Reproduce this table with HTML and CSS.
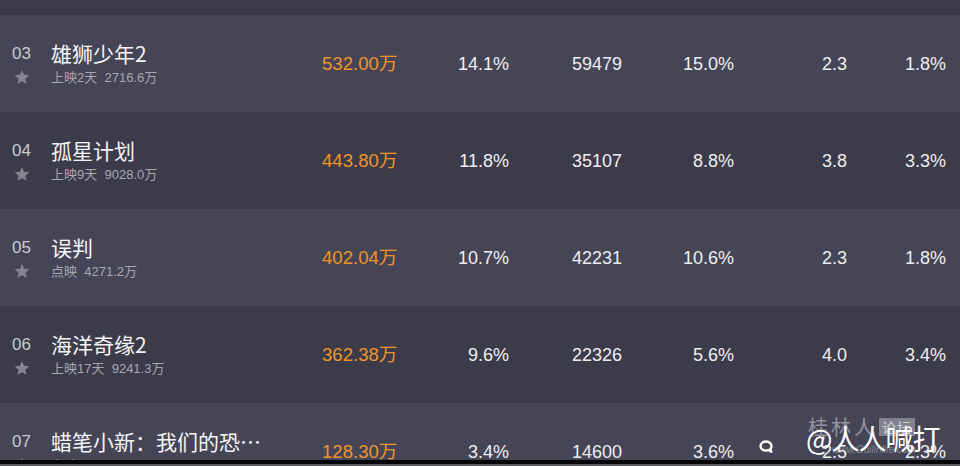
FILE: index.html
```html
<!DOCTYPE html>
<html lang="zh">
<head>
<meta charset="utf-8">
<link rel="stylesheet" href="styles.css">
</head>
<body>
<div class="screen">
  <div class="table">
    <div class="band"></div>
    <div class="row light">
      <div class="rankcol"><span class="rank">03</span><svg class="star" width="16" height="16" viewBox="0 0 24 24"><path d="M12 1.5l3.2 7.2 7.8.7-5.9 5.2 1.8 7.7L12 18.3l-6.9 4 1.8-7.7L1 9.4l7.8-.7z"/></svg></div>
      <div class="titlecol"><div class="title">雄狮少年2</div><div class="sub">上映2天&nbsp; 2716.6万</div></div>
      <div class="num box">532.00万</div>
      <div class="num">14.1%</div>
      <div class="num">59479</div>
      <div class="num">15.0%</div>
      <div class="num">2.3</div>
      <div class="num">1.8%</div>
    </div>
    <div class="row dark">
      <div class="rankcol"><span class="rank">04</span><svg class="star" width="16" height="16" viewBox="0 0 24 24"><path d="M12 1.5l3.2 7.2 7.8.7-5.9 5.2 1.8 7.7L12 18.3l-6.9 4 1.8-7.7L1 9.4l7.8-.7z"/></svg></div>
      <div class="titlecol"><div class="title">孤星计划</div><div class="sub">上映9天&nbsp; 9028.0万</div></div>
      <div class="num box">443.80万</div>
      <div class="num">11.8%</div>
      <div class="num">35107</div>
      <div class="num">8.8%</div>
      <div class="num">3.8</div>
      <div class="num">3.3%</div>
    </div>
    <div class="row light">
      <div class="rankcol"><span class="rank">05</span><svg class="star" width="16" height="16" viewBox="0 0 24 24"><path d="M12 1.5l3.2 7.2 7.8.7-5.9 5.2 1.8 7.7L12 18.3l-6.9 4 1.8-7.7L1 9.4l7.8-.7z"/></svg></div>
      <div class="titlecol"><div class="title">误判</div><div class="sub">点映&nbsp; 4271.2万</div></div>
      <div class="num box">402.04万</div>
      <div class="num">10.7%</div>
      <div class="num">42231</div>
      <div class="num">10.6%</div>
      <div class="num">2.3</div>
      <div class="num">1.8%</div>
    </div>
    <div class="row dark">
      <div class="rankcol"><span class="rank">06</span><svg class="star" width="16" height="16" viewBox="0 0 24 24"><path d="M12 1.5l3.2 7.2 7.8.7-5.9 5.2 1.8 7.7L12 18.3l-6.9 4 1.8-7.7L1 9.4l7.8-.7z"/></svg></div>
      <div class="titlecol"><div class="title">海洋奇缘2</div><div class="sub">上映17天&nbsp; 9241.3万</div></div>
      <div class="num box">362.38万</div>
      <div class="num">9.6%</div>
      <div class="num">22326</div>
      <div class="num">5.6%</div>
      <div class="num">4.0</div>
      <div class="num">3.4%</div>
    </div>
    <div class="row light">
      <div class="rankcol"><span class="rank">07</span><svg class="star" width="16" height="16" viewBox="0 0 24 24"><path d="M12 1.5l3.2 7.2 7.8.7-5.9 5.2 1.8 7.7L12 18.3l-6.9 4 1.8-7.7L1 9.4l7.8-.7z"/></svg></div>
      <div class="titlecol"><div class="title">蜡笔小新：我们的恐…</div><div class="sub">上映5天&nbsp; 1032.6万</div></div>
      <div class="num box">128.30万</div>
      <div class="num">3.4%</div>
      <div class="num">14600</div>
      <div class="num">3.6%</div>
      <div class="num">2.5</div>
      <div class="num">2.3%</div>
    </div>
    <div class="watermark">
      <div class="wm-site">桂林人<span class="wm-tag">论坛</span></div>
      <div class="wm-url">www.Guilinlife.com</div>
      <div class="wm-weibo">@人人喊打</div>
    </div>
    <svg class="wm-icon" width="16" height="16" viewBox="0 0 16 16">
      <path d="M8 2.5c-3.2 0-5.5 2-5.5 4.6S4.8 11.6 8 11.6c1 0 1.9-.2 2.7-.6l2.6 1.8-.9-2.7c.7-.8 1.1-1.8 1.1-2.9 0-2.6-2.3-4.7-5.5-4.7z" fill="none" stroke="#ffffff" stroke-width="2.4" stroke-linejoin="round"/>
    </svg>
  </div>
  <div class="edge-black"></div>
  <div class="edge-grey"></div>
</div>
</body>
</html>
```

FILE: styles.css
```css
* { box-sizing: border-box; }
html, body { margin: 0; padding: 0; }
body {
  width: 960px;
  height: 466px;
  overflow: hidden;
  background: #3c3b4a;
  font-family: "Liberation Sans", "Noto Sans CJK SC", sans-serif;
}
.screen {
  display: flex;
  flex-direction: column;
  height: 466px;
}
.table {
  position: relative;
  height: 460px;
  overflow: hidden;
}
.band {
  height: 15px;
  background: #3b3a48;
}
.row {
  height: 97px;
  display: grid;
  grid-template-columns: 51px 271px 78px 109px 113px 112px 113px 99px;
  align-items: start;
}
.row.light { background: #464556; }
.row.dark { background: #3c3b4a; }
.rankcol {
  display: flex;
  flex-direction: column;
  align-items: flex-start;
  padding-top: 28px;
  padding-left: 12px;
}
.rank {
  font-size: 17px;
  line-height: 22px;
  color: #c9c9d0;
}
.star {
  margin-top: 4px;
  margin-left: 2px;
  fill: #85848f;
}
.titlecol {
  padding-top: 25px;
  display: flex;
  flex-direction: column;
}
.title {
  font-family: "Noto Sans CJK SC", sans-serif;
  font-size: 21px;
  line-height: 26px;
  color: #f4f4f6;
  white-space: nowrap;
}
.sub {
  margin-top: 4px;
  font-family: "Liberation Sans", "Noto Sans CJK SC", sans-serif;
  font-size: 13px;
  line-height: 16px;
  color: #a8a7b0;
  white-space: nowrap;
}
.num {
  padding-top: 37px;
  font-size: 18px;
  line-height: 24px;
  color: #eeeef2;
  text-align: right;
  white-space: nowrap;
}
.num.box {
  text-align: left;
  font-size: 18.6px;
  color: #f0942a;
  font-family: "Liberation Sans", "Noto Sans CJK SC", sans-serif;
}
.edge-black {
  height: 4px;
  background: #050505;
}
.edge-grey {
  height: 2px;
  background: #5a5a60;
}
.watermark {
  position: absolute;
  left: 806px;
  top: 414px;
  width: 152px;
  height: 46px;
}
.wm-site {
  position: absolute;
  left: 2px;
  top: 0;
  font-family: "Noto Sans CJK SC", sans-serif;
  font-size: 20px;
  line-height: 26px;
  color: rgba(215, 215, 222, 0.55);
  letter-spacing: 3px;
}
.wm-tag {
  display: inline-block;
  vertical-align: top;
  margin-top: 4px;
  margin-left: 2px;
  padding: 0 3px;
  font-size: 14px;
  line-height: 18px;
  letter-spacing: 1px;
  background: rgba(190, 190, 198, 0.5);
  color: rgba(240, 240, 240, 0.75);
}
.wm-url {
  position: absolute;
  left: 26px;
  top: 30px;
  font-size: 10px;
  font-style: italic;
  color: rgba(220, 220, 225, 0.45);
}
.wm-weibo {
  position: absolute;
  left: 0;
  top: 6px;
  font-family: "Noto Sans CJK SC", sans-serif;
  font-size: 28px;
  line-height: 36px;
  color: #ffffff;
  letter-spacing: -1px;
}
.wm-icon {
  position: absolute;
  left: 758px;
  top: 439px;
}
```
